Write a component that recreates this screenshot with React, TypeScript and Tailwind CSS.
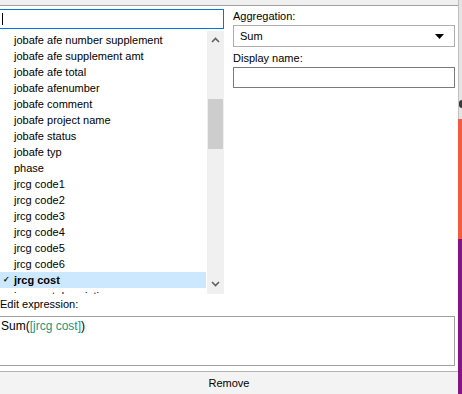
import React from 'react';

const fields = [
  "jobafe afe number supplement",
  "jobafe afe supplement amt",
  "jobafe afe total",
  "jobafe afenumber",
  "jobafe comment",
  "jobafe project name",
  "jobafe status",
  "jobafe typ",
  "phase",
  "jrcg code1",
  "jrcg code2",
  "jrcg code3",
  "jrcg code4",
  "jrcg code5",
  "jrcg code6",
  "jrcg cost",
  "jrcg cost description",
];

function Chevron({ up }: { up?: boolean }) {
  return (
    <svg width="9" height="6" viewBox="0 0 9 6">
      <path
        d={up ? "M1 5 L4.5 1.5 L8 5" : "M1 1 L4.5 4.5 L8 1"}
        fill="none"
        stroke="#606060"
        strokeWidth="1.6"
      />
    </svg>
  );
}

export default function App() {
  const selected = "jrcg cost";

  return (
    <div className="flex w-[462px] h-[394px] overflow-hidden bg-white text-[11px] text-black font-['Liberation_Sans',Arial,sans-serif]">
      <div className="flex flex-col w-[458px]">
        <div className="h-[6px] bg-[#f0f0f0] border-b border-[#a0a0a0]" />

        <div className="flex">
          {/* field list */}
          <div className="flex flex-col w-[224px]">
            <div className="mt-[3px] h-[20px] border border-l-0 border-[#0078d7] flex items-center pl-[2px]">
              <div className="w-px h-[12px] bg-black" />
            </div>
            <div className="mt-[2px] h-[263px] flex">
              <div className="w-[206px] overflow-hidden pt-[1px]">
                {fields.map((f) => {
                  const active = f === selected;
                  return (
                    <div
                      key={f}
                      className={
                        "h-[16px] flex items-center relative pl-[14px] whitespace-nowrap " +
                        (active ? "bg-[#cce8ff] font-bold" : "")
                      }
                    >
                      {active && (
                        <span className="absolute left-[3px] top-0 text-[8px] leading-[16px]">✓</span>
                      )}
                      {f}
                    </div>
                  );
                })}
              </div>
              <div className="ml-[1px] w-[17px] bg-[#f0f0f0] flex flex-col">
                <div className="h-[17px] flex items-center justify-center">
                  <Chevron up />
                </div>
                <div className="h-[51px]" />
                <div className="h-[50px] mx-[1px] bg-[#cdcdcd]" />
                <div className="flex-1" />
                <div className="h-[17px] flex items-center justify-center mb-[2px]">
                  <Chevron />
                </div>
              </div>
            </div>
          </div>

          {/* aggregation settings */}
          <div className="ml-[9px] w-[222px] flex flex-col pt-[2px]">
            <div className="h-[16px] leading-[16px]">Aggregation:</div>
            <div className="mt-[1px] h-[22px] border border-[#adadad] flex items-center justify-between pl-[6px] pr-[10px]">
              <span>Sum</span>
              <svg width="9" height="5" viewBox="0 0 9 5">
                <path d="M0 0 H9 L4.5 5 Z" fill="#000" />
              </svg>
            </div>
            <div className="mt-[3px] h-[16px] leading-[16px]">Display name:</div>
            <div className="mt-px h-[21px] border border-[#7a7a7a]" />
          </div>
        </div>

        <div className="mt-[2px] h-[16px] leading-[16px]">Edit expression:</div>
        <div className="mt-[4px] h-[50px] w-[455px] border border-l-0 border-[#a0a0a0] pl-px pt-[1px] text-[12px] leading-[16px]">
          Sum(<span className="text-[#24957a]">[jrcg cost]</span>)
        </div>

        <div className="mt-[5px] h-px bg-[#b4b4b4]" />
        <div className="h-[22px] bg-[#f3f3f3] flex items-center justify-center">Remove</div>
      </div>

      {/* edge of the neighbouring window */}
      <div className="flex flex-col w-[4px]">
        <div className="h-[119px] flex">
          <div className="w-px bg-[#c0c0c0]" />
          <div className="flex-1 bg-[#e4e4e4] flex flex-col">
            <div className="mt-[100px] h-[8px] rounded-l-full bg-[#3a3a3a]" />
          </div>
        </div>
        <div className="h-[120px] bg-[#f25c3f]" />
        <div className="flex-1 bg-[#871487]" />
      </div>
    </div>
  );
}
